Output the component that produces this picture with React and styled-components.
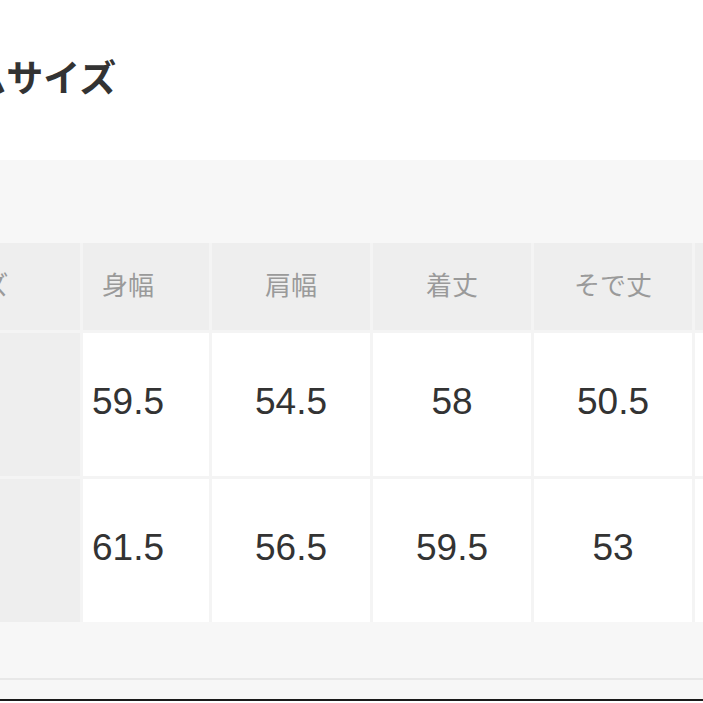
import React from 'react';
import styled, { createGlobalStyle } from 'styled-components';

const GlobalStyle = createGlobalStyle`
  html, body {
    margin: 0;
    padding: 0;
    background: #fff;
    overflow: hidden;
  }
`;

const Frame = styled.div`
  width: 703px;
  height: 703px;
  overflow: hidden;
  display: flex;
  flex-direction: column;
  background: #fff;
`;

// the screenshot is cropped: the left part of the page sits off screen
const Shifted = styled.div`
  margin-left: -140px;
  display: flex;
  flex-direction: column;
`;

const Title = styled.h2`
  box-sizing: border-box;
  height: 160px;
  margin: 0;
  padding: 52px 0 0 2px;
  font-family: "Noto Sans CJK JP", sans-serif;
  font-size: 37px;
  font-weight: 700;
  line-height: 1.3;
  color: #333;
  white-space: nowrap;
`;

const Panel = styled.div`
  box-sizing: border-box;
  height: 520px;
  padding-top: 83px;
  background: #f7f7f7;
  border-bottom: 2px solid #e8e8e8;
`;

const Grid = styled.div`
  display: grid;
  grid-template-columns: 220px 126px repeat(4, 158px);
  grid-template-rows: 87px 143px 143px;
  gap: 3px;
  width: max-content;
  background: #f4f4f4;
`;

const HeadCell = styled.div`
  display: flex;
  align-items: center;
  justify-content: center;
  padding-right: ${p => (p.$first ? '36px' : '0')};
  padding-bottom: 6px;
  background: #eeeeee;
  font-family: "Noto Sans CJK JP", sans-serif;
  font-size: 26px;
  color: #9a9a9a;
  white-space: nowrap;
`;

const SizeCell = styled.div`
  display: flex;
  align-items: center;
  justify-content: center;
  background: #eeeeee;
  font-family: "Liberation Sans", sans-serif;
  font-size: 30px;
  color: #333;
`;

const ValueCell = styled.div`
  display: flex;
  align-items: center;
  justify-content: center;
  padding-right: ${p => (p.$first ? '36px' : '0')};
  padding-bottom: 5px;
  background: #fff;
  font-family: "Liberation Sans", "Noto Sans CJK JP", sans-serif;
  font-size: 37px;
  color: #333;
`;

const Footer = styled.div`
  height: 19px;
  background: #f7f7f7;
  border-bottom: 2px solid #1a1a1a;
`;

const columns = ['身幅', '肩幅', '着丈', 'そで丈', '裾幅'];

const rows = [
  { size: 'M', values: ['59.5', '54.5', '58', '50.5', '55'] },
  { size: 'L', values: ['61.5', '56.5', '59.5', '53', '57'] },
];

export default function App() {
  return (
    <Frame>
      <GlobalStyle />
      <Shifted>
        <Title>アイテムサイズ</Title>
        <Panel>
          <Grid>
            <HeadCell>サイズ</HeadCell>
            {columns.map((c, i) => (
              <HeadCell key={c} $first={i === 0}>{c}</HeadCell>
            ))}
            {rows.map(r => (
              <React.Fragment key={r.size}>
                <SizeCell>{r.size}</SizeCell>
                {r.values.map((v, i) => (
                  <ValueCell key={i} $first={i === 0}>{v}</ValueCell>
                ))}
              </React.Fragment>
            ))}
          </Grid>
        </Panel>
      </Shifted>
      <Footer />
    </Frame>
  );
}
